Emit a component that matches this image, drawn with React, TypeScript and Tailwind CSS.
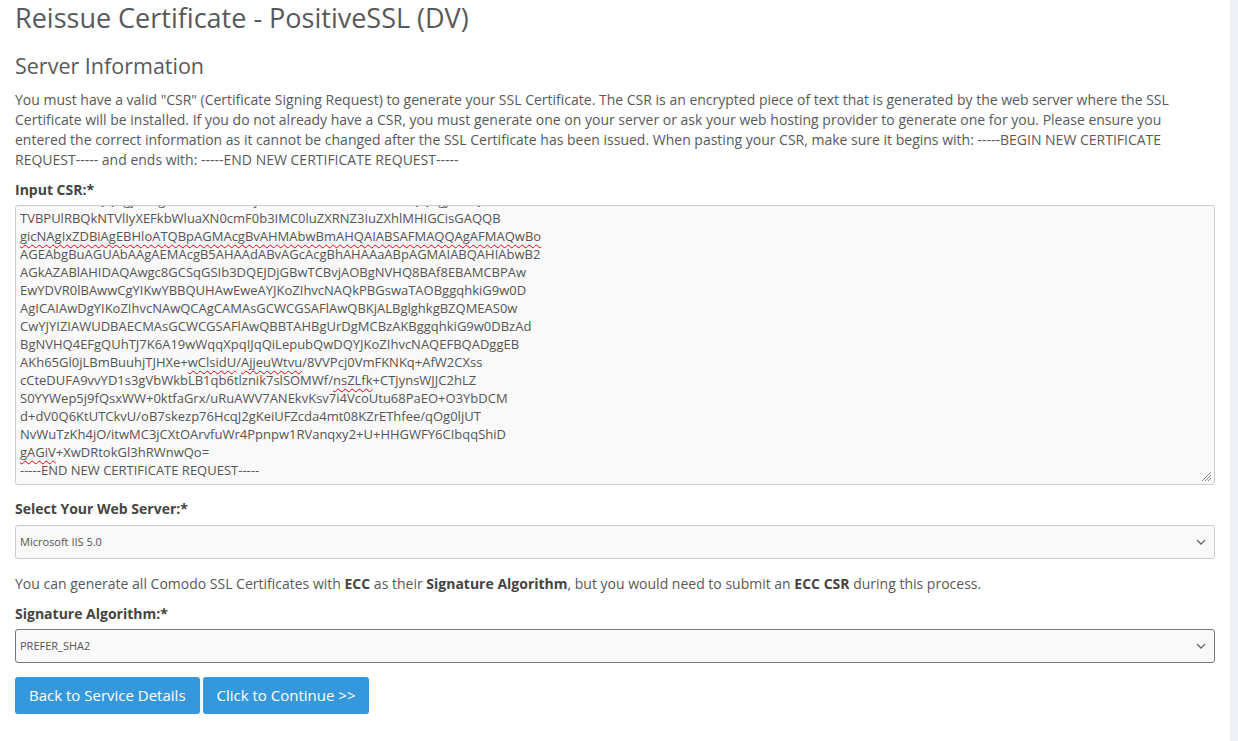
import React from "react";

const lines: { t: string; bad?: string[]; allBad?: boolean }[] = [
  { t: "MBwGCisGAQQBgjcNAgMxDhYMNi4xLjc2MDEuMi4wMHIGCisGAQQBgjcCAQ4xZDBi" },
  { t: "TVBPUlRBQkNTVlIyXEFkbWluaXN0cmF0b3IMC0luZXRNZ3IuZXhlMHIGCisGAQQB" },
  { t: "gicNAgIxZDBiAgEBHloATQBpAGMAcgBvAHMAbwBmAHQAIABSAFMAQQAgAFMAQwBo", allBad: true },
  { t: "AGEAbgBuAGUAbAAgAEMAcgB5AHAAdABvAGcAcgBhAHAAaABpAGMAIABQAHIAbwB2" },
  { t: "AGkAZABlAHIDAQAwgc8GCSqGSIb3DQEJDjGBwTCBvjAOBgNVHQ8BAf8EBAMCBPAw" },
  { t: "EwYDVR0lBAwwCgYIKwYBBQUHAwEweAYJKoZIhvcNAQkPBGswaTAOBggqhkiG9w0D" },
  { t: "AgICAIAwDgYIKoZIhvcNAwQCAgCAMAsGCWCGSAFlAwQBKjALBglghkgBZQMEAS0w" },
  { t: "CwYJYIZIAWUDBAECMAsGCWCGSAFlAwQBBTAHBgUrDgMCBzAKBggqhkiG9w0DBzAd" },
  { t: "BgNVHQ4EFgQUhTJ7K6A19wWqqXpqIJqQiLepubQwDQYJKoZIhvcNAQEFBQADggEB" },
  { t: "AKh65Gl0jLBmBuuhjTJHXe+wClsidU/AjjeuWtvu/8VVPcj0VmFKNKq+AfW2CXss", bad: ["wClsidU", "AjjeuWtvu"] },
  { t: "cCteDUFA9vvYD1s3gVbWkbLB1qb6tlznik7slSOMWf/nsZLfk+CTjynsWJJC2hLZ", bad: ["nsZLfk"] },
  { t: "S0YYWep5j9fQsxWW+0ktfaGrx/uRuAWV7ANEkvKsv7i4VcoUtu68PaEO+O3YbDCM" },
  { t: "d+dV0Q6KtUTCkvU/oB7skezp76HcqJ2gKeiUFZcda4mt08KZrEThfee/qOg0ljUT" },
  { t: "NvWuTzKh4jO/itwMC3jCXtOArvfuWr4Ppnpw1RVanqxy2+U+HHGWFY6CIbqqShiD" },
  { t: "gAGiV+XwDRtokGl3hRWnwQo=", bad: ["gAGiV"] },
  { t: "-----END NEW CERTIFICATE REQUEST-----" },
];

const wavy = "underline decoration-wavy decoration-[#e00] decoration-1 underline-offset-[3px]";

function Line({ t, bad, allBad }: { t: string; bad?: string[]; allBad?: boolean }) {
  if (allBad) return <div><span className={wavy}>{t}</span></div>;
  if (!bad || bad.length === 0) return <div>{t}</div>;
  const parts: React.ReactNode[] = [];
  let rest = t;
  let k = 0;
  for (const b of bad) {
    const i = rest.indexOf(b);
    if (i < 0) continue;
    parts.push(<span key={k++}>{rest.slice(0, i)}</span>);
    parts.push(
      <span key={k++} className={wavy}>
        {b}
      </span>
    );
    rest = rest.slice(i + b.length);
  }
  parts.push(<span key={k++}>{rest}</span>);
  return <div>{parts}</div>;
}

function Chevron() {
  return (
    <svg width="10" height="6" viewBox="0 0 10 6" className="shrink-0">
      <path d="M1 1l4 4 4-4" fill="none" stroke="#666" strokeWidth="1.3" />
    </svg>
  );
}

export default function App() {
  return (
    <div
      className="flex min-h-[741px] bg-white text-[#58595b]"
      style={{ fontFamily: "'Open Sans', 'Noto Sans', sans-serif" }}
    >
      <div className="w-[1230px] shrink-0 px-[15px]">
        <h1 className="text-[27px] leading-[36px] text-[#58595b] font-normal">
          Reissue Certificate - PositiveSSL (DV)
        </h1>
        <h2 className="mt-[15px] text-[21.5px] leading-[30px] text-[#58595b] font-normal">
          Server Information
        </h2>
        <p className="mt-[9px] text-[14px] leading-[20px]">
          You must have a valid "CSR" (Certificate Signing Request) to generate your SSL Certificate. The CSR is an
          encrypted piece of text that is generated by the web server where the SSL Certificate will be installed. If
          you do not already have a CSR, you must generate one on your server or ask your web hosting provider to
          generate one for you. Please ensure you entered the correct information as it cannot be changed after the SSL
          Certificate has been issued. When pasting your CSR, make sure it begins with: -----BEGIN NEW CERTIFICATE
          REQUEST----- and ends with: -----END NEW CERTIFICATE REQUEST-----
        </p>
        <div className="mt-[10px] text-[14px] leading-[20px] font-bold text-[#444]">Input CSR:*</div>
        <div className="relative mt-[5px] h-[280px] border border-[#ccc] rounded-[3px] bg-[#f9f9f9] overflow-hidden flex flex-col justify-end pl-[4px] pb-[5px] text-[13px] leading-[18px] text-[#555]">
          {lines.map((l, i) => (
            <Line key={i} {...l} />
          ))}
          <svg className="absolute right-[2px] bottom-[2px]" width="12" height="12" viewBox="0 0 12 12">
            <path d="M11 2L2 11M11 5L5 11M11 8L8 11" stroke="#888" strokeWidth="1" />
          </svg>
        </div>
        <div className="mt-[14px] text-[14px] leading-[20px] font-bold text-[#444]">Select Your Web Server:*</div>
        <div className="mt-[6px] h-[34px] border border-[#ccc] rounded-[3px] bg-[#f9f9f9] flex items-center justify-between pl-[4px] pr-[8px] text-[11px] text-[#555]">
          <span>Microsoft IIS 5.0</span>
          <Chevron />
        </div>
        <p className="mt-[15px] text-[14px] leading-[20px]">
          You can generate all Comodo SSL Certificates with <b className="text-[#444]">ECC</b> as their{" "}
          <b className="text-[#444]">Signature Algorithm</b>, but you would need to submit an{" "}
          <b className="text-[#444]">ECC CSR</b> during this process.
        </p>
        <div className="mt-[10px] text-[14px] leading-[20px] font-bold text-[#444]">Signature Algorithm:*</div>
        <div className="mt-[5px] h-[34px] border border-[#777] rounded-[3px] bg-[#f9f9f9] flex items-center justify-between pl-[4px] pr-[8px] text-[11px] text-[#555]">
          <span>PREFER_SHA2</span>
          <Chevron />
        </div>
        <div className="mt-[14px] flex gap-[3px]">
          <button className="h-[37px] px-[14px] rounded-[3px] bg-[#3598dc] text-white text-[15px]">
            Back to Service Details
          </button>
          <button className="h-[37px] px-[14px] rounded-[3px] bg-[#3598dc] text-white text-[15px]">
            Click to Continue &gt;&gt;
          </button>
        </div>
      </div>
      <div className="flex-1 bg-[#eef0f5]" />
    </div>
  );
}
